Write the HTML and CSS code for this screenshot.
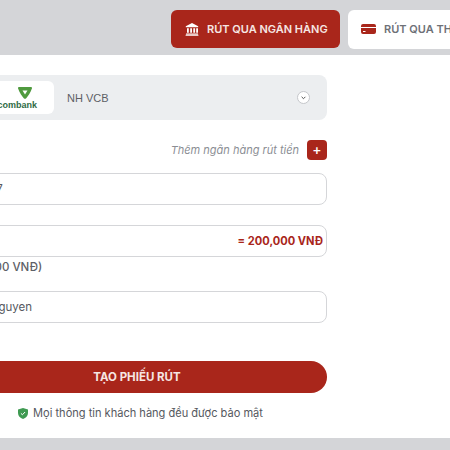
FILE: index.html
```html
<!DOCTYPE html>
<html lang="vi">
<head>
<meta charset="utf-8">
<title>Rút tiền</title>
<link rel="stylesheet" href="styles.css">
</head>
<body>
<header class="tabs">
  <button class="tab tab-active">
    <svg class="tab-icon" viewBox="0 0 14 14" width="14" height="14"><path fill="#fff" d="M7 1 .8 4.200v1.100h12.400V4.200zM2 6.200h1.800v4.600H2zm3.200 0H7v4.600H5.200zm3.100 0h1.800v4.600H8.300zm2.900 0H13v4.600h-1.800zM1 11.500h12v1H1zm-.4 1.300h12.800v.9H.6z"/></svg>
    <span>RÚT QUA NGÂN HÀNG</span>
  </button>
  <button class="tab tab-idle">
    <svg class="tab-icon" viewBox="0 0 15 10" width="15" height="10"><path fill="#a9261b" d="M2 0h11a2 2 0 0 1 2 2v1H0V2a2 2 0 0 1 2-2zM0 4h15v4a2 2 0 0 1-2 2H2a2 2 0 0 1-2-2zM2 7v1h2.500V7z"/></svg>
    <span>RÚT QUA THẺ CÀO</span>
  </button>
</header>
<main class="panel">
  <form class="form">
    <div class="select">
      <div class="logo">
        <svg viewBox="0 0 14 12" width="14" height="12" class="logo-mark"><path fill="#4f9a3e" fill-rule="evenodd" d="M1 0h12c1 0 1.200.8.900 1.600C12.500 6 10 9.500 8 11.400c-.6.600-1.400.6-2 0C4 9.500 1.500 6 .1 1.600-.2.800 0 0 1 0zm3.500 3.500L7 7.500l2.500-4z"/></svg>
        <span class="logo-text">Vietcombank</span>
      </div>
      <span class="select-value">NH VCB</span>
      <svg class="chevron" viewBox="0 0 13 13" width="13" height="13"><circle cx="6.500" cy="6.500" r="6" fill="#fff" stroke="#c4c6ca"/><path d="M4.600 5.800 6.500 7.700 8.400 5.800" fill="none" stroke="#555" stroke-width="1"/></svg>
    </div>
    <div class="add-row">
      <em class="add-label">Thêm ngân hàng rút tiền</em>
      <span class="add-btn">+</span>
    </div>
    <div class="field field-first"><span class="field-text">12347</span></div>
    <div class="field field-amount"><span class="field-text">200</span><strong class="amount">= 200,000 VNĐ</strong></div>
    <p class="hint">(Tối đa 200 VNĐ)</p>
    <div class="field field-last"><span class="field-text">Van Nguyen</span></div>
    <button class="submit" type="button">TẠO PHIẾU RÚT</button>
    <p class="secure">
      <svg viewBox="0 0 12 13" width="10" height="11"><path fill="#3f9a52" d="M6 0 12 1.800V6c0 3.500-2.500 6-6 7C2.500 12 0 9.500 0 6V1.800z"/><path d="M3.500 6.300 5.300 8 8.500 4.700" fill="none" stroke="#fff" stroke-width="1.200"/></svg>
      <span>Mọi thông tin khách hàng đều được bảo mật</span>
    </p>
  </form>
</main>
</body>
</html>
```
FILE: styles.css
```css
* { box-sizing: border-box; }
html, body { margin: 0; height: 450px; overflow: hidden; }
body { background: #d4d5d8; font-family: "Inter", "Liberation Sans", sans-serif; color: #55585e; width: 450px; }
.tabs { display: flex; gap: 8px; align-items: center; height: 55px; padding: 3px 0 0 171px; width: 700px; }
.tab { display: flex; align-items: center; gap: 8px; border: 0; border-radius: 6px; font: 600 11px "Inter", sans-serif; padding: 0 13px 0 14px; white-space: nowrap; flex: none; }
.tab-icon { flex: none; }
.tab-active { background: #a9261b; color: #f6e6e3; height: 38px; width: 169px; }
.tab-idle { background: #fff; color: #6e7177; height: 39px; width: 170px; padding-left: 13px; }
.panel { background: #fff; height: 383px; width: 450px; padding-top: 20px; }
.form { width: 380px; margin-left: -53px; display: flex; flex-direction: column; }
.select { height: 45px; background: #eceef0; border-radius: 8px; display: flex; align-items: center; padding: 0 17px 0 6px; }
.logo { width: 101px; height: 33px; margin-right: 13px; padding: 2px 17px 0 0; background: #fff; border-radius: 6px; display: flex; flex-direction: column; align-items: flex-end; justify-content: center; }
.logo-mark { margin: 0 5px 1px 0; }
.logo-text { font: 700 9px "Liberation Sans", sans-serif; color: #2f6a45; line-height: 10px; white-space: nowrap; }
.select-value { flex: 1; font: 11px "Liberation Sans", sans-serif; color: #5d6066; }
.chevron { flex: none; }
.add-row { display: flex; justify-content: flex-end; align-items: center; gap: 8px; margin-top: 20px; height: 20px; }
.add-label { font-size: 11px; color: #8b8e94; }
.add-btn { width: 20px; height: 20px; background: #a9261b; border-radius: 4px; color: #fff; font: 500 14px/19px "Inter", sans-serif; text-align: center; }
.field { height: 32px; border: 1px solid #d5d6d9; border-radius: 8px; display: flex; align-items: center; justify-content: space-between; padding: 0 3px 0 17px; font-size: 11.500px; background: #fff; }
.field-first { margin-top: 13px; padding-left: 22px; }
.field-amount { margin-top: 20px; }
.field-last { margin-top: 15px; padding-left: 18px; }
.amount { color: #a9261b; font-size: 11.100px; font-weight: 700; }
.hint { margin: 2px 0 0; height: 17px; line-height: 17px; font-size: 11.500px; font-weight: 500; color: #5d6066; }
.submit { margin-top: 38px; height: 32px; border: 0; border-radius: 16px; background: #a9261b; color: #f6e6e3; font: 700 11.500px "Inter", sans-serif; }
.secure { margin: 13px 0 0; padding-left: 7px; display: flex; justify-content: center; align-items: center; gap: 5px; font-size: 11.050px; height: 14px; color: #55585e; }
```
